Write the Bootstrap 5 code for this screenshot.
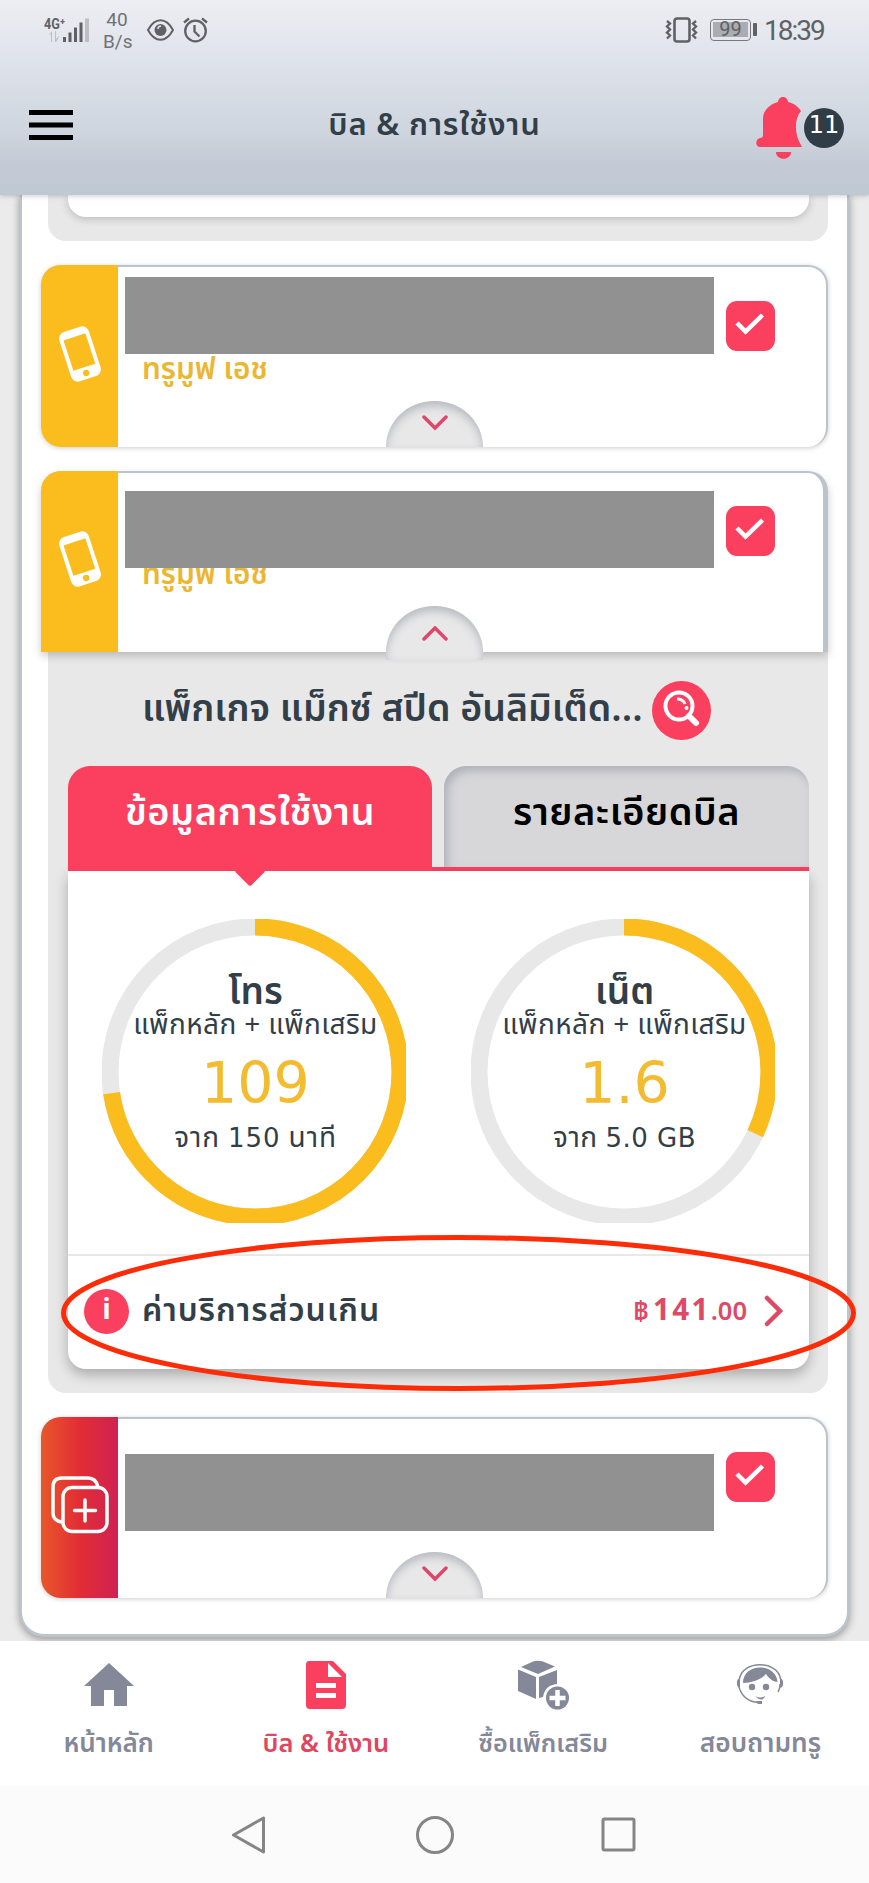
<!DOCTYPE html>
<html lang="th">
<head>
<meta charset="utf-8">
<meta name="viewport" content="width=device-width, initial-scale=1">
<title>บิล &amp; การใช้งาน</title>
<link rel="stylesheet" href="https://cdn.jsdelivr.net/npm/bootstrap@5.3.0/dist/css/bootstrap.min.css">
<style>
:root{--pink:#fb3f5f;--amber:#fbbd1e;--ink:#323e48;--slate:#848899;--edge:#bbc3cb}
html,body{height:1883px;overflow:hidden}
body{font-family:"Noto Sans Thai","Noto Sans",sans-serif;color:var(--ink);background:#ebebeb;width:869px}
svg{display:block;flex:none}
.fit{white-space:nowrap;display:block;width:max-content}
.num{font-family:"DejaVu Sans",sans-serif}
.topbar{height:195px;background:linear-gradient(#edeef3,#dfe3eb 30%,#ced5de 68%,#c3cad5 85%,#bec9d4);position:relative;z-index:3;box-shadow:0 1px 5px #0003}
.status{height:60px;padding:0 44px;font-family:Roboto,sans-serif;color:#5f6165}
.rate{font-size:19px;line-height:22px;width:28px;margin-left:13px;padding-top:2px;text-align:center;color:#707276}
.clock{font-size:28px;line-height:32px;letter-spacing:-2px;margin-left:7px;width:61px;padding-top:2px}
.battery{width:41px;height:22px;border:1.5px solid #77797d;border-radius:4px;padding:2px;margin-left:12px;position:relative}
.battery b{display:block;background:#aaacb1;height:15px;font-weight:400;font-size:20px;line-height:15px;text-align:center}
.battery:after{content:"";position:absolute;right:-7px;top:3px;width:4px;height:13px;background:#5f6165;border-radius:1px}
.appbar{height:135px;padding:0 25px 0 28px}
.appbar h1{font-size:31px;font-weight:600;line-height:40px;margin:0;letter-spacing:.8px}
.count{width:40px;height:40px;background:#303d47;color:#fff;font-size:24px;line-height:35px}
.viewport{height:1446px;overflow:hidden}
.sheet{margin:0 22px;height:1439px;background:#fff;border-radius:0 0 22px 22px;box-shadow:0 1px 0 2px #bcc4cd,0 3px 8px 2px #0006;padding:0 19px}
.tray{background:#e8e8e8;margin-left:7px;border-radius:0 0 18px 18px;padding:0 19px 0 20px}
.pane{background:#fff;border-radius:0 0 18px 18px;box-shadow:0 6px 13px #0004}
.pane.soft{box-shadow:0 2px 8px #0003}
.acct{height:182px;border-radius:20px;border-top:2px solid var(--edge);border-right:2px solid var(--edge);background:#fff;box-shadow:0 1px 5px #0003;position:relative}
.acct.open{border-radius:20px 20px 0 0;height:181px;border-right-width:5px;box-shadow:0 4px 9px #0003}
.strip{width:77px;margin-top:-2px;background:var(--amber);border-radius:20px 0 0 20px;flex:none}
.open .strip{border-radius:20px 0 0 0}
.strip.multi{background:linear-gradient(90deg,#e8572a,#e22d35 50%,#cf2252)}
.mask{background:#919191;width:589px;height:77px;position:relative;z-index:1}
.brand{color:#ebb632;font-size:29.8px;font-weight:600;line-height:36px;margin-left:17px}
.tick{width:49px;height:50px;background:var(--pink);border-radius:11px;margin-left:12px;flex:none}
.toggle{position:absolute;left:345px;bottom:0;width:97px;height:46px;border-radius:48px 48px 0 0/46px 46px 0 0;background:#e8e8e9;box-shadow:inset 0 5px 9px #9a9da699;padding-top:14px}
.open .toggle{height:54px;bottom:-8px;background:#e8e8e9}
.plan{height:114px;padding-left:74px}
.plan .name{font-size:37.500px;font-weight:600;line-height:50px}
.lens{width:59px;height:59px;background:var(--pink)}
.tabbtn{height:105px;width:364px;border-radius:22px 22px 0 0;font-size:38px;font-weight:600;line-height:96px;letter-spacing:.5px}
.tabbtn.on{background:var(--pink);color:#fff;position:relative}
.tabbtn.on:after{content:"";position:absolute;left:171px;bottom:-11px;width:22px;height:22px;background:var(--pink);transform:rotate(45deg);border-radius:2px}
.tabbtn.off{background:#d7d7d9;color:#000;height:101px;width:365px;box-shadow:inset 4px 5px 9px #90939d88}
.usage{height:383px;padding:48px 34px 0}
.dial{width:304px;height:304px;position:relative;overflow:hidden}
.dial .txt{position:absolute;inset:0;padding-left:3px}
.dial h2{font-size:37px;font-weight:600;line-height:40px;margin:54px 0 0}
.dial .sub{font-size:28px;line-height:34px;margin-top:-4px;letter-spacing:.4px}
.dial .big{font-size:57px;line-height:60px;color:#f3bb30;margin-top:10px}
.dial .of{font-size:28px;line-height:36px;margin-top:7px;letter-spacing:.9px}
.of .num{font-size:26px}
.extra{height:115px;border-top:2px solid #e8e8e9;padding:0 25px 3px 16px}
.info{width:45px;height:45px;background:var(--pink);color:#fff;font-weight:700;font-size:28px;line-height:44px}
.extra .lbl{font-size:32px;font-weight:600;line-height:44px;margin-left:13px;letter-spacing:1px}
.fee{color:#de4965;font-weight:600;line-height:40px}
.ring{position:absolute;left:60px;top:1234px;z-index:5}
.tabs-bottom{height:145px;background:#fff;position:relative;z-index:4;color:var(--slate);font-weight:600}
.tabs-bottom a{flex:1;padding-top:16px;color:inherit;text-decoration:none}
.tabs-bottom .lb{line-height:36px;margin-top:17px;font-size:26px}
.tabs-bottom a.on{color:#e0465f}
.keys{height:97px;background:#fbfbfb;padding-left:231px}
</style>
</head>
<body>
<header class="topbar">
  <div class="status d-flex align-items-center">
    <svg width="46" height="30" viewBox="0 0 46 30" fill="#5f6165"><text x="0" y="13.500" font-size="15" font-weight="700" font-family="Roboto" textLength="21" lengthAdjust="spacingAndGlyphs">4G⁺</text><path d="M19 22h3v5h-3zM24.500 17.500h3V27h-3zM30 12.500h3V27h-3zM35.500 7.500h3V27h-3z"/><path d="M41 3.500h4V27h-4zM5 20l3-4v11H7v-8zM11 16h1v8l3-3v1l-3 5h-1z" fill="#bcbec4"/></svg>
    <div class="rate">40<br>B/s</div>
    <svg class="ms-3" width="27" height="22" viewBox="0 0 27 22" fill="none" stroke="#5f6165" stroke-width="2"><path d="M1 11C8-2 19-2 26 11 19 24 8 24 1 11z"/><circle cx="13.500" cy="11" r="6" fill="#5f6165" stroke="none"/><path d="M11 10q0-3 3-3" stroke="#dde" stroke-width="1.500"/></svg>
    <svg style="margin-left:9px" width="25" height="26" viewBox="0 0 25 26" fill="none" stroke="#5f6165" stroke-width="2.300"><circle cx="12.500" cy="14" r="10.300"/><path d="M11.500 8v6.500l5 5M1 5.500l5-4M24 5.500l-5-4"/></svg>
    <svg class="ms-auto" width="33" height="26" viewBox="0 0 33 26" fill="none" stroke="#5f6165"><rect x="9.500" y="1.500" width="15" height="23" rx="2.500" stroke-width="2.600"/><path d="M2 4l3 2.500-3 3 3 3-3 3 3 3-3 3M31 4l-3 2.500 3 3-3 3 3 3-3 3 3 3" stroke-width="2.400"/></svg>
    <div class="battery"><b>99</b></div>
    <div style="width:6px"></div>
    <div class="clock"><span class="fit">18:39</span></div>
  </div>
  <div class="appbar d-flex position-relative">
    <svg style="margin-top:50px" width="45" height="31"><path d="M1 0h44v5H1zM1 12.500h44v5H1zM1 25h44v5H1z"/></svg>
    <h1 class="position-absolute top-0 start-50 translate-middle-x" style="margin-top:46px"><span class="fit">บิล &amp; การใช้งาน</span></h1>
    <svg class="ms-auto" style="margin-top:36px" width="48" height="65" viewBox="0 0 48 65" fill="#fb3f5f"><path d="M23 6a5 5 0 0 1 10 0c5 1 10 4 13 9-7 8-7 24 1 36H5c-5 0-5-8 0-9 2 0 3-1 3-3V23C8 14 15 8 23 6zM21 56h15c0 9-15 9-15 0z"/></svg>
    <div class="count num rounded-circle text-center" style="margin:48px 0 0 1px">11</div>
  </div>
</header>

<div class="viewport">
 <main class="sheet">
  <div class="tray" style="height:46px"><div class="pane soft" style="height:22px"></div></div>

  <section class="acct d-flex" style="margin-top:24px">
    <div class="strip d-flex justify-content-center align-items-center"><svg width="46" height="60" viewBox="-23 -30 46 60" style="margin:-5px 0 0 1px"><g transform="rotate(-18)"><rect x="-15.500" y="-26" width="31" height="52" rx="7" fill="#fff"/><rect x="-11.500" y="-18" width="23" height="32" fill="#fbbd1e"/><circle cy="20" r="3.200" fill="#fbbd1e"/></g></svg></div>
    <div style="margin:10px 0 0 7px"><div class="mask"></div><div class="brand fit" style="margin-top:-2px">ทรูมูฟ เอช</div></div>
    <div class="tick" style="margin-top:34px"><svg width="49" height="50" fill="none" stroke="#fff" stroke-width="4.500"><path d="M11 22l8.500 8.500L36.500 14"/></svg></div>
    <div class="toggle d-flex justify-content-center"><svg width="26" height="18" fill="none" stroke="#e0466a" stroke-width="3.500" stroke-linecap="round"><path d="M2 2l11 11L24 2"/></svg></div>
  </section>

  <section class="acct open d-flex" style="margin-top:24px">
    <div class="strip d-flex justify-content-center align-items-center"><svg width="46" height="60" viewBox="-23 -30 46 60" style="margin:-5px 0 0 1px"><g transform="rotate(-18)"><rect x="-15.500" y="-26" width="31" height="52" rx="7" fill="#fff"/><rect x="-11.500" y="-18" width="23" height="32" fill="#fbbd1e"/><circle cy="20" r="3.200" fill="#fbbd1e"/></g></svg></div>
    <div style="margin:18px 0 0 7px"><div class="mask"></div><div class="brand fit" style="margin-top:-11px">ทรูมูฟ เอช</div></div>
    <div class="tick" style="margin-top:33px"><svg width="49" height="50" fill="none" stroke="#fff" stroke-width="4.500"><path d="M11 22l8.500 8.500L36.500 14"/></svg></div>
    <div class="toggle d-flex justify-content-center" style="padding-top:20px"><svg width="26" height="18" fill="none" stroke="#e0466a" stroke-width="3.500" stroke-linecap="round"><path d="M2 13L13 2l11 11"/></svg></div>
  </section>

  <div class="tray" style="height:741px">
    <div class="plan d-flex">
      <div style="width:510px;padding-top:33px"><div class="name fit">แพ็กเกจ แม็กซ์ สปีด อันลิมิเต็ด...</div></div>
      <div class="lens rounded-circle" style="margin-top:29px"><svg width="59" height="59" fill="none" stroke="#fff" stroke-width="4"><circle cx="27" cy="25" r="13.500"/><path d="M37 35l7 7" stroke-width="6" stroke-linecap="round"/><path d="M25 18q6 0 8 5" stroke-width="3"/><circle cx="34.500" cy="27" r="2" fill="#fff" stroke="none"/></svg></div>
    </div>
    <div class="d-flex justify-content-between" style="height:105px;background:linear-gradient(#fb3f5f,#fb3f5f) bottom/100% 4px no-repeat">
      <div class="tabbtn on"><span class="fit mx-auto">ข้อมูลการใช้งาน</span></div>
      <div class="tabbtn off"><span class="fit mx-auto">รายละเอียดบิล</span></div>
    </div>
    <div class="pane">
      <div class="usage d-flex justify-content-between">
        <div class="dial"><svg width="304" height="304" fill="none" stroke-width="17"><circle cx="153" cy="153" r="145" stroke="#e8e8e8"/><circle cx="153" cy="153" r="145" stroke="#fbbd1e" pathLength="150" stroke-dasharray="109 150" transform="rotate(-90 153 153)"/></svg>
          <div class="txt d-flex flex-column align-items-center"><h2 class="fit">โทร</h2><div class="sub fit">แพ็กหลัก + แพ็กเสริม</div><div class="big num fit">109</div><div class="of fit">จาก <span class="num">150</span> นาที</div></div></div>
        <div class="dial"><svg width="304" height="304" fill="none" stroke-width="17"><circle cx="153" cy="153" r="145" stroke="#e8e8e8"/><circle cx="153" cy="153" r="145" stroke="#fbbd1e" pathLength="50" stroke-dasharray="16 50" transform="rotate(-90 153 153)"/></svg>
          <div class="txt d-flex flex-column align-items-center"><h2 class="fit">เน็ต</h2><div class="sub fit">แพ็กหลัก + แพ็กเสริม</div><div class="big num fit">1.6</div><div class="of fit" style="letter-spacing:.5px">จาก <span class="num">5.0 GB</span></div></div></div>
      </div>
      <div class="extra d-flex align-items-center">
        <div class="info rounded-circle text-center">i</div>
        <div class="lbl fit">ค่าบริการส่วนเกิน</div>
        <div class="fee ms-auto d-flex align-items-baseline"><span style="font-size:27px;margin-right:4px">฿</span><span style="font-size:29.500px;font-weight:700;letter-spacing:2.400px">141</span><span style="font-size:25.500px">.00</span></div>
        <svg style="margin-left:17px" width="20" height="32" fill="none" stroke="#de4965" stroke-width="4.500" stroke-linecap="round"><path d="M3 3l13 13L3 29"/></svg>
      </div>
    </div>
  </div>

  <section class="acct d-flex" style="margin-top:24px;height:181px">
    <div class="strip multi d-flex justify-content-center align-items-center"><svg width="58" height="58" style="margin-top:-5px" fill="none" stroke="#fff" stroke-width="3.500"><path d="M11 46Q2 45 2 37V11Q2 2 11 2h26q8 0 10 9"/><rect x="12" y="11.500" width="44" height="44" rx="9"/><path d="M34 24v21M23.500 34.500h21" stroke-linecap="round"/></svg></div>
    <div style="margin:35px 0 0 7px"><div class="mask"></div></div>
    <div class="tick" style="margin-top:33px"><svg width="49" height="50" fill="none" stroke="#fff" stroke-width="4.500"><path d="M11 22l8.500 8.500L36.500 14"/></svg></div>
    <div class="toggle d-flex justify-content-center"><svg width="26" height="18" fill="none" stroke="#e0466a" stroke-width="3.500" stroke-linecap="round"><path d="M2 2l11 11L24 2"/></svg></div>
  </section>
 </main>
</div>

<nav class="tabs-bottom d-flex">
  <a href="#" class="d-flex flex-column align-items-center"><svg width="52" height="52" fill="currentColor"><path d="M26 6l25 23h-7v20H31V33H21v16H8V29H1z"/></svg><span class="lb fit">หน้าหลัก</span></a>
  <a href="#" class="on d-flex flex-column align-items-center"><svg width="42" height="52" fill="#fb3f5f"><path fill-rule="evenodd" d="M4 4h24l13 13v31q0 4-4 4H5q-4 0-4-4V8q0-4 3-4zM23 6v14h14zM11 26v5h20v-5zM11 36v5h20v-5z"/></svg><span class="lb fit" style="font-size:25.500px">บิล &amp; ใช้งาน</span></a>
  <a href="#" class="d-flex flex-column align-items-center"><svg width="52" height="54" style="margin-bottom:-2px" fill="currentColor"><path d="M4 10L16 4.500q5-1.500 10 0L38 9.500 21 17zM1 12.500l18 7.500v22L1 34zM40 13v14q-12 1-14 13l-4 1V20z"/><circle cx="40.500" cy="41" r="11.500"/><path d="M40.500 33v16M32.500 41h16" stroke="#fff" stroke-width="4.500"/></svg><span class="lb fit" style="font-size:25.200px">ซื้อแพ็กเสริม</span></a>
  <a href="#" class="d-flex flex-column align-items-center"><svg width="48" height="52" fill="currentColor"><path d="M7 26C7 5.500 40 5.500 41.500 25 37 25 32 20.500 30 17 26 22 16 26 7 26z"/><path d="M3.500 22C6 3 42 3 44.500 22M3 30q4 14 19 15.500M44 27q0 5-2 8" fill="none" stroke="currentColor" stroke-width="1.400"/><path d="M1 25q0-3 3-4v10q-3-1-3-4zM47 25q0-3-3-4v10q3-1 3-4zM19 39q5 3 10.500 0-3.500 7-10.500 0zM20 44h6v3h-4z"/><circle cx="16" cy="30" r="3.200"/><circle cx="30" cy="30" r="3.200"/></svg><span class="lb fit" style="font-size:26.300px">สอบถามทรู</span></a>
</nav>
<div class="keys d-flex align-items-center">
  <svg width="36" height="40" fill="none" stroke="#858585" stroke-width="3" stroke-linejoin="round"><path d="M2.500 20L32.500 3v34z"/></svg>
  <svg style="margin-left:148px" width="40" height="40" fill="none" stroke="#858585" stroke-width="3"><circle cx="20" cy="20" r="17.500"/></svg>
  <svg style="margin-left:146px" width="36" height="40" fill="none" stroke="#858585" stroke-width="3"><rect x="2" y="4" width="31" height="31" rx="1.500"/></svg>
</div>
<svg class="ring" width="798" height="159" fill="none" stroke="#fb2c07" stroke-width="5"><ellipse cx="398.500" cy="79" rx="395" ry="75.500"/></svg>
<script src="https://cdn.jsdelivr.net/npm/bootstrap@5.3.0/dist/js/bootstrap.bundle.min.js"></script>
</body>
</html>
